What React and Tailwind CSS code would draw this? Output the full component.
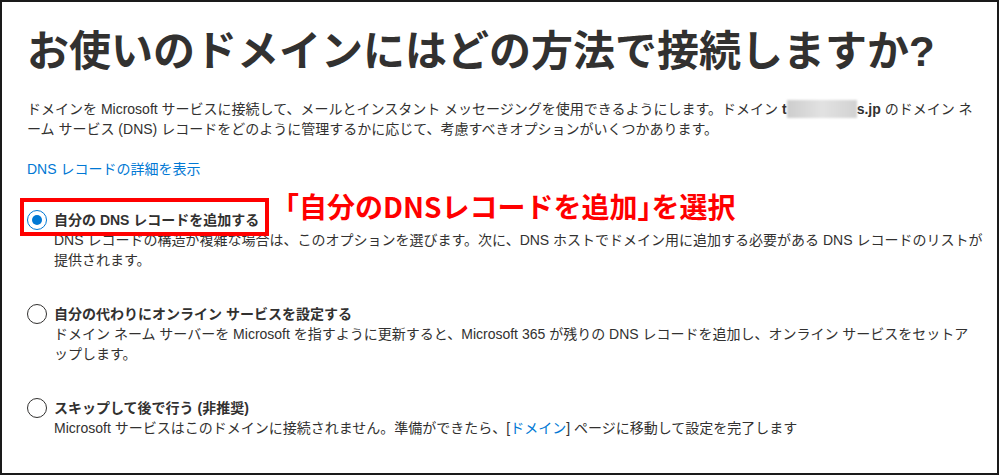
import React from "react";

function Radio({ checked }) {
  return (
    <span
      className={
        "flex h-[20px] w-[20px] shrink-0 items-center justify-center rounded-full border " +
        (checked ? "border-[#0078d4]" : "border-[#323130]")
      }
    >
      {checked && <span className="h-[10px] w-[10px] rounded-full bg-[#0078d4]" />}
    </span>
  );
}

function Option({ checked, label, children }) {
  return (
    <div className="flex flex-col">
      <div className="flex items-center gap-[7px] h-[20px]">
        <Radio checked={checked} />
        <span className="font-semibold text-[14px] leading-[20px] text-[#323130] whitespace-nowrap">{label}</span>
      </div>
      <div className="pl-[27px] text-[14px] leading-[20px] text-[#323130]">{children}</div>
    </div>
  );
}

export default function App() {
  return (
    <div className="relative h-[475px] w-[999px] overflow-hidden border-2 border-[#1a1a1a] bg-white font-['Liberation_Sans','Noto_Sans_CJK_JP',sans-serif] text-[#323130]">
      <div className="flex flex-col pl-[25px] pt-[25px]">
        <h1 className="text-[42px] leading-[50px] font-bold text-[#323130] whitespace-nowrap tracking-[0px]">
          お使いのドメインにはどの方法で接続しますか?
        </h1>
        <p className="mt-[22px] text-[14px] leading-[20px] whitespace-nowrap">
          ドメインを Microsoft サービスに接続して、メールとインスタント メッセージングを使用できるようにします。ドメイン{" "}
          <b className="font-bold">t</b>
          <span className="inline-block h-[18px] w-[70px] align-[-4px] bg-gradient-to-r from-[#cdcdcd] via-[#e2e2e2] to-[#d2d2d2] blur-[1px]" />
          <b className="font-bold">s.jp</b> のドメイン ネ
          <br />
          ーム サービス (DNS) レコードをどのように管理するかに応じて、考慮すべきオプションがいくつかあります。
        </p>
        <a className="mt-[20px] text-[14px] leading-[20px] text-[#0078d4] w-fit">DNS レコードの詳細を表示</a>
        <div className="mt-[31px] flex flex-col gap-[34px]">
          <Option checked label="自分の DNS レコードを追加する">
            DNS レコードの構造が複雑な場合は、このオプションを選びます。次に、DNS ホストでドメイン用に追加する必要がある DNS レコードのリストが
            <br />
            提供されます。
          </Option>
          <Option label="自分の代わりにオンライン サービスを設定する">
            ドメイン ネーム サーバーを Microsoft を指すように更新すると、Microsoft 365 が残りの DNS レコードを追加し、オンライン サービスをセットア
            <br />
            ップします。
          </Option>
          <Option label="スキップして後で行う (非推奨)">
            Microsoft サービスはこのドメインに接続されません。準備ができたら、[<span className="text-[#0078d4]">ドメイン</span>] ページに移動して設定を完了します
          </Option>
        </div>
      </div>

      <div className="absolute left-[18px] top-[196px] h-[38px] w-[249px] border-4 border-[#ff0000]" />
      <div className="absolute left-[283px] top-[188px] whitespace-nowrap text-[28px] leading-[32px] font-bold text-[#ff0000] font-['Noto_Sans_CJK_JP',sans-serif]">
        <span className="[font-feature-settings:'halt']">「</span>自分のDNSレコードを追加<span className="[font-feature-settings:'halt']">」</span>を選択
      </div>
    </div>
  );
}
